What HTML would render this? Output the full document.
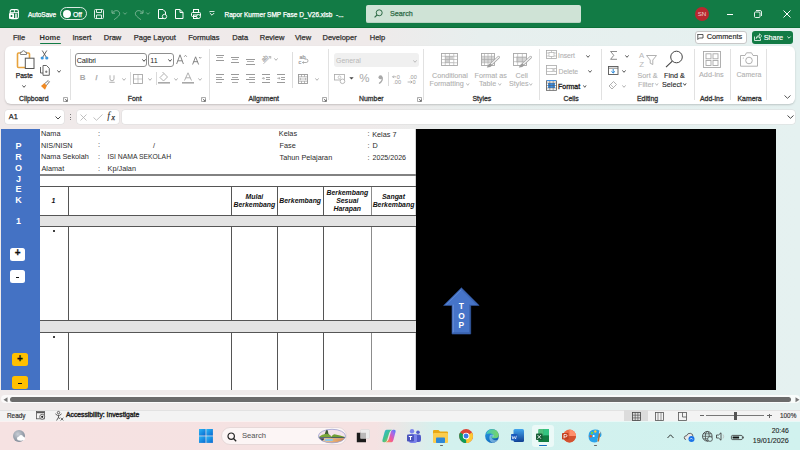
<!DOCTYPE html><html><head><meta charset="utf-8"><style>
html,body{margin:0;padding:0;width:800px;height:450px;overflow:hidden;}
body{position:relative;font-family:"Liberation Sans",sans-serif;background:linear-gradient(90deg,#f0eaea 0%,#efeaea 46%,#e7efee 60%,#e5f1f0 100%);}
.t{position:absolute;white-space:nowrap;-webkit-text-stroke:0.25px currentColor;}
.r{position:absolute;}
.ns{-webkit-text-stroke:0;}
svg{overflow:visible}
</style></head><body>
<div class="r" style="left:0px;top:0px;width:800px;height:28px;background:#127b45"></div>
<div class="r" style="left:0px;top:27px;width:800px;height:1px;background:#0b7037"></div>
<svg class="r" style="left:9px;top:8.8px" width="10" height="10.2" viewBox="0 0 10 10.2"><rect x="1.2" y="0.6" width="8.2" height="9" rx="1.6" fill="none" stroke="#fff" stroke-width="1.1"/><path d="M1.2 3.6 H9.4 M5.4 0.6 V3.6" stroke="#fff" stroke-width="0.9"/><rect x="0" y="4.2" width="5" height="5.6" rx="0.6" fill="#fff"/><rect x="1.7" y="6" width="1.6" height="2" fill="#127b45"/><rect x="6.3" y="4.6" width="1.4" height="4.6" fill="#fff"/></svg>
<div class="t " style="left:28px;top:11.56px;font-size:6.5px;line-height:6.5px;color:#ffffff;font-weight:normal;">AutoSave</div>
<div class="r" style="left:60px;top:7px;width:27px;height:13px;border:1px solid rgba(255,255,255,0.85);border-radius:7px;box-sizing:border-box"></div>
<div class="r" style="left:62.5px;top:9.5px;width:8.0px;height:8.0px;background:#fff;border-radius:50%"></div>
<div class="t " style="left:73px;top:11.79px;font-size:6.8px;line-height:6.8px;color:#ffffff;font-weight:normal;">Off</div>
<svg class="r" style="left:94px;top:9px" width="10" height="10" viewBox="0 0 10 10"><rect x="0.5" y="0.5" width="9" height="9" rx="1" fill="none" stroke="#dfeee5" stroke-width="1"/><path d="M2.5 0.5 V3.5 H7.5 V0.5 M2.5 9.5 V6 H7.5 V9.5" fill="none" stroke="#dfeee5" stroke-width="1"/></svg>
<svg class="r" style="left:111px;top:9px" width="10" height="11" viewBox="0 0 10 11"><path d="M1.5 3.8 C3.5 1, 7.5 0.8, 8.5 3.8 C9.3 6.3, 6.5 8, 3.2 10.6" fill="none" stroke="#7fb898" stroke-width="1"/><path d="M1 1.2 V4.2 H4" fill="none" stroke="#7fb898" stroke-width="1"/></svg>
<svg class="r" style="left:123px;top:12px" width="4" height="3" viewBox="0 0 4 3"><path d="M0.3 0.5 L2 2.3 L3.7 0.5" fill="none" stroke="#7fb898" stroke-width="0.8"/></svg>
<svg class="r" style="left:133.5px;top:9px" width="10" height="11" viewBox="0 0 10 11"><path d="M8.5 3.8 C6.5 1, 2.5 0.8, 1.5 3.8 C0.7 6.3, 3.5 8, 6.8 10.6" fill="none" stroke="#7fb898" stroke-width="1"/><path d="M9 1.2 V4.2 H6" fill="none" stroke="#7fb898" stroke-width="1"/></svg>
<svg class="r" style="left:146px;top:12px" width="4" height="3" viewBox="0 0 4 3"><path d="M0.3 0.5 L2 2.3 L3.7 0.5" fill="none" stroke="#7fb898" stroke-width="0.8"/></svg>
<svg class="r" style="left:158px;top:9px" width="10" height="10" viewBox="0 0 10 10"><path d="M0.5 0.5 H5 L7.5 3 V9.5 H0.5 Z" fill="none" stroke="#fff" stroke-width="1"/><circle cx="6.5" cy="7.5" r="2.2" fill="#127b45" stroke="#fff" stroke-width="0.9"/></svg>
<svg class="r" style="left:175px;top:9px" width="9" height="10" viewBox="0 0 9 10"><path d="M0.5 0.5 H5 L8 3.5 V9.5 H0.5 Z M5 0.5 V3.5 H8" fill="none" stroke="#fff" stroke-width="1"/></svg>
<svg class="r" style="left:191px;top:9px" width="10" height="10" viewBox="0 0 10 10"><rect x="2.5" y="0.5" width="5" height="3" fill="none" stroke="#fff" stroke-width="1"/><rect x="0.5" y="3.5" width="9" height="4" rx="1" fill="none" stroke="#fff" stroke-width="1"/><rect x="2.5" y="6" width="5" height="3.5" fill="none" stroke="#fff" stroke-width="1"/><circle cx="7.5" cy="7.5" r="2" fill="#127b45" stroke="#fff" stroke-width="0.9"/></svg>
<svg class="r" style="left:209px;top:11px" width="6" height="5" viewBox="0 0 6 5"><path d="M0.5 0.5 H5.5" stroke="#fff" stroke-width="0.8"/><path d="M0.8 2 L3 4.2 L5.2 2" fill="none" stroke="#fff" stroke-width="0.9"/></svg>
<div class="t " style="left:224.5px;top:11.56px;font-size:6.5px;line-height:6.5px;color:#ffffff;font-weight:normal;">Rapor Kurmer SMP Fase D_V26.xlsb&nbsp; -...</div>
<div class="r" style="left:366px;top:5px;width:215px;height:18px;background:#cfe3d6;border-radius:2px;border-bottom:1px solid #b8d3c2;box-sizing:border-box"></div>
<svg class="r" style="left:374px;top:9px" width="9" height="9" viewBox="0 0 9 9"><circle cx="5.2" cy="3.8" r="3" fill="none" stroke="#2f6b47" stroke-width="1"/><path d="M3 6 L0.6 8.4" stroke="#2f6b47" stroke-width="1.1"/></svg>
<div class="t " style="left:390px;top:10.47px;font-size:7.2px;line-height:7.2px;color:#2f6b47;font-weight:normal;">Search</div>
<div class="r" style="left:695px;top:7px;width:14px;height:14px;background:#b8282f;border-radius:50%"></div>
<div class="t " style="left:602px;width:200px;text-align:center;top:11.13px;font-size:6.2px;line-height:6.2px;color:#f0d0d2;font-weight:normal;-webkit-text-stroke:0">SN</div>
<div class="r" style="left:727px;top:14px;width:6px;height:1px;background:#fff"></div>
<svg class="r" style="left:754px;top:10px" width="8" height="8" viewBox="0 0 8 8"><rect x="0.5" y="2" width="5.5" height="5.5" rx="1" fill="none" stroke="#fff" stroke-width="0.9"/><path d="M2 0.5 H6 A1.5 1.5 0 0 1 7.5 2 V6" fill="none" stroke="#fff" stroke-width="0.9"/></svg>
<svg class="r" style="left:783px;top:10px" width="8" height="8" viewBox="0 0 8 8"><path d="M0.5 0.5 L7.5 7.5 M7.5 0.5 L0.5 7.5" stroke="#fff" stroke-width="1"/></svg>
<div class="t" style="left:13px;top:34.00px;font-size:7.5px;line-height:7.5px;color:#323130;font-weight:normal;">File</div>
<div class="t" style="left:39.5px;top:34.00px;font-size:7.5px;line-height:7.5px;color:#323130;font-weight:bold;-webkit-text-stroke:0">Home</div>
<div class="t" style="left:72.5px;top:34.00px;font-size:7.5px;line-height:7.5px;color:#323130;font-weight:normal;">Insert</div>
<div class="t" style="left:103.75px;top:34.00px;font-size:7.5px;line-height:7.5px;color:#323130;font-weight:normal;">Draw</div>
<div class="t" style="left:133.75px;top:34.00px;font-size:7.5px;line-height:7.5px;color:#323130;font-weight:normal;">Page Layout</div>
<div class="t" style="left:188.25px;top:34.00px;font-size:7.5px;line-height:7.5px;color:#323130;font-weight:normal;">Formulas</div>
<div class="t" style="left:232.25px;top:34.00px;font-size:7.5px;line-height:7.5px;color:#323130;font-weight:normal;">Data</div>
<div class="t" style="left:259.75px;top:34.00px;font-size:7.5px;line-height:7.5px;color:#323130;font-weight:normal;">Review</div>
<div class="t" style="left:295px;top:34.00px;font-size:7.5px;line-height:7.5px;color:#323130;font-weight:normal;">View</div>
<div class="t" style="left:322.5px;top:34.00px;font-size:7.5px;line-height:7.5px;color:#323130;font-weight:normal;">Developer</div>
<div class="t" style="left:369.75px;top:34.00px;font-size:7.5px;line-height:7.5px;color:#323130;font-weight:normal;">Help</div>
<div class="r" style="left:39.5px;top:43px;width:21.5px;height:1.2999999999999972px;background:#127b45;border-radius:1px"></div>
<div class="r" style="left:694.5px;top:30.5px;width:52.0px;height:13.0px;background:#fff;border:1px solid #c8c8c8;border-radius:3px;box-sizing:border-box"></div>
<svg class="r" style="left:697px;top:34.3px" width="6.5" height="6" viewBox="0 0 6.5 6"><path d="M0.5 0.5 H6 V4 H2.3 L0.8 5.5 V0.5 Z" fill="none" stroke="#333" stroke-width="0.8"/></svg>
<div class="t " style="left:706.7px;top:33.38px;font-size:7.35px;line-height:7.35px;color:#262626;font-weight:normal;-webkit-text-stroke:0.15px #262626">Comments</div>
<div class="r" style="left:751.5px;top:30.5px;width:41.5px;height:13.5px;background:#127b45;border-radius:3px"></div>
<svg class="r" style="left:754px;top:33px" width="8" height="8" viewBox="0 0 8 8"><path d="M0.5 3.5 V7.5 H6.5 V5.5" fill="none" stroke="#fff" stroke-width="0.8"/><path d="M2 5.5 Q2.5 2.5 5.5 2.5 V0.8 L7.8 3 L5.5 5.2 V3.7 Q3.5 3.7 2 5.5Z" fill="none" stroke="#fff" stroke-width="0.7"/></svg>
<div class="t " style="left:763.7px;top:33.71px;font-size:7.3px;line-height:7.3px;color:#fff;font-weight:normal;-webkit-text-stroke:0.15px #fff">Share</div>
<svg class="r" style="left:787px;top:36px" width="4" height="3" viewBox="0 0 4 3"><path d="M0.3 0.5 L2 2.2 L3.7 0.5" fill="none" stroke="#fff" stroke-width="0.8"/></svg>
<div class="r" style="left:5px;top:46px;width:790px;height:57.5px;background:#fff;border-radius:6px;box-shadow:0 1px 2px rgba(0,0,0,0.18)"></div>
<svg class="r" style="left:16px;top:50px" width="19" height="19" viewBox="0 0 19 19"><rect x="1.5" y="3" width="12" height="14.5" rx="1" fill="none" stroke="#e8a33d" stroke-width="1.6"/><path d="M4.5 3.5 V2.2 H6 A1.5 1.5 0 0 1 9 2.2 H10.5 V4.5 H4.5 Z" fill="#fff" stroke="#777" stroke-width="0.9"/><rect x="9.3" y="8.2" width="8.7" height="10.3" fill="#fff" stroke="#555" stroke-width="1"/></svg>
<div class="t " style="left:15.7px;top:72.75px;font-size:6.7px;line-height:6.7px;color:#262626;font-weight:normal;">Paste</div>
<svg class="r" style="left:22px;top:84.5px" width="4" height="3" viewBox="0 0 4 3"><path d="M0.4 0.4 L2.0 2.3 L3.6 0.4" fill="none" stroke="#424242" stroke-width="0.9"/></svg>
<svg class="r" style="left:40px;top:50px" width="9" height="10" viewBox="0 0 9 10"><path d="M2.2 0.5 L6.2 7 M6.8 0.5 L2.8 7" stroke="#555" stroke-width="0.9"/><circle cx="2.2" cy="8" r="1.6" fill="#3a96dd"/><circle cx="6.8" cy="8" r="1.6" fill="#3a96dd"/></svg>
<svg class="r" style="left:40px;top:65px" width="10" height="11" viewBox="0 0 10 11"><path d="M0.5 2 V8 H3" fill="none" stroke="#555" stroke-width="0.9"/><path d="M3 0.5 H6.5 L9.3 3.3 V10.3 H3 Z" fill="none" stroke="#555" stroke-width="0.9"/><path d="M5 6.8 H7.5 M6.25 5.5 V8" stroke="#555" stroke-width="0.7"/></svg>
<svg class="r" style="left:56.5px;top:70px" width="4" height="3" viewBox="0 0 4 3"><path d="M0.4 0.4 L2.0 2.3 L3.6 0.4" fill="none" stroke="#424242" stroke-width="0.9"/></svg>
<svg class="r" style="left:40px;top:80px" width="10" height="11" viewBox="0 0 10 11"><path d="M1 6 L5 9.8 L7 5.5 L4.5 3 Z" fill="#f08a24"/><path d="M4.8 3.5 L8.2 0.6 L9.4 1.8 L6.5 5.3" fill="#fff" stroke="#555" stroke-width="0.8"/></svg>
<div class="t " style="left:19px;top:95.54px;font-size:6.9px;line-height:6.9px;color:#333333;font-weight:normal;-webkit-text-stroke:0.3px #333333">Clipboard</div>
<svg class="r" style="left:63px;top:96.5px" width="5" height="5" viewBox="0 0 5 5"><path d="M0.5 4.5 V0.5 H4.5 V4.5 Z" fill="none" stroke="#8a8a8a" stroke-width="0.7"/><path d="M1.8 1.8 L4.2 4.2 M4.2 2.5 V4.2 H2.5" fill="none" stroke="#555" stroke-width="0.7"/></svg>
<div class="r" style="left:70px;top:49px;width:1px;height:51px;background:#e1e1e1"></div>
<div class="r" style="left:75px;top:53px;width:72px;height:14px;border:1px solid #8f8f8f;border-radius:3px;box-sizing:border-box"></div>
<div class="t " style="left:76.8px;top:56.97px;font-size:7.2px;line-height:7.2px;color:#262626;font-weight:normal;-webkit-text-stroke:0;letter-spacing:-0.2px">Calibri</div>
<svg class="r" style="left:141.5px;top:59.3px" width="4" height="3" viewBox="0 0 4 3"><path d="M0.4 0.4 L2.0 2.3 L3.6 0.4" fill="none" stroke="#333" stroke-width="0.9"/></svg>
<div class="r" style="left:148.3px;top:53px;width:25.399999999999977px;height:14px;border:1px solid #8f8f8f;border-radius:3px;box-sizing:border-box"></div>
<div class="t " style="left:150.3px;top:56.97px;font-size:7.2px;line-height:7.2px;color:#262626;font-weight:normal;-webkit-text-stroke:0">11</div>
<svg class="r" style="left:168px;top:59.3px" width="4" height="3" viewBox="0 0 4 3"><path d="M0.4 0.4 L2.0 2.3 L3.6 0.4" fill="none" stroke="#333" stroke-width="0.9"/></svg>
<svg class="r" style="left:176px;top:54px" width="12" height="11" viewBox="0 0 12 11"><path d="M0.6 10 L4 0.8 L7.4 10 M1.8 6.8 H6.2" fill="none" stroke="#777" stroke-width="0.9"/><path d="M8.2 2.8 L9.5 1.3 L10.8 2.8" fill="none" stroke="#777" stroke-width="0.7"/></svg>
<svg class="r" style="left:192px;top:56px" width="10" height="9" viewBox="0 0 10 9"><path d="M0.6 8.5 L3.6 0.8 L6.6 8.5 M1.6 5.7 H5.6" fill="none" stroke="#777" stroke-width="0.9"/><path d="M7 1 L8.2 2.3 L9.4 1" fill="none" stroke="#777" stroke-width="0.7"/></svg>
<div class="t " style="left:79.8px;top:74.12px;font-size:8px;line-height:8px;color:#a8a8a8;font-weight:bold;-webkit-text-stroke:0">B</div>
<div class="t " style="left:95.3px;top:74.12px;font-size:8px;line-height:8px;color:#a8a8a8;font-weight:normal;font-style:italic">I</div>
<svg class="r" style="left:109.3px;top:75px" width="6" height="8" viewBox="0 0 6 8"><path d="M1 0.3 V3.8 A2 2 0 0 0 5 3.8 V0.3" fill="none" stroke="#a8a8a8" stroke-width="0.9"/><path d="M0.3 7.3 H5.7" stroke="#a8a8a8" stroke-width="0.9"/></svg>
<svg class="r" style="left:121.5px;top:77.5px" width="4" height="3" viewBox="0 0 4 3"><path d="M0.4 0.4 L2.0 2.3 L3.6 0.4" fill="none" stroke="#a8a8a8" stroke-width="0.9"/></svg>
<div class="r" style="left:129.5px;top:72px;width:1.0px;height:13px;background:#dadada"></div>
<svg class="r" style="left:133px;top:74px" width="10" height="10" viewBox="0 0 10 10"><rect x="0.5" y="0.5" width="9" height="9" fill="none" stroke="#a8a8a8" stroke-width="0.9"/><path d="M5 0.5 V9.5 M0.5 5 H9.5" stroke="#a8a8a8" stroke-width="0.6"/></svg>
<svg class="r" style="left:147.5px;top:77.5px" width="4" height="3" viewBox="0 0 4 3"><path d="M0.4 0.4 L2.0 2.3 L3.6 0.4" fill="none" stroke="#a8a8a8" stroke-width="0.9"/></svg>
<div class="r" style="left:155.5px;top:72px;width:1.0px;height:13px;background:#dadada"></div>
<svg class="r" style="left:158px;top:72px" width="12" height="12" viewBox="0 0 12 12"><path d="M2 5.5 L6 1.5 L9.5 5 L5.5 9 Z" fill="none" stroke="#a8a8a8" stroke-width="0.9"/><path d="M6 1.5 L4.5 0" stroke="#a8a8a8" stroke-width="0.9"/><rect x="0" y="10" width="12" height="1.6" fill="#a8a8a8"/></svg>
<svg class="r" style="left:173.5px;top:77.5px" width="4" height="3" viewBox="0 0 4 3"><path d="M0.4 0.4 L2.0 2.3 L3.6 0.4" fill="none" stroke="#a8a8a8" stroke-width="0.9"/></svg>
<svg class="r" style="left:182px;top:72px" width="12" height="12" viewBox="0 0 12 12"><path d="M2.5 8.5 L6 0.8 L9.5 8.5 M3.8 5.8 H8.2" fill="none" stroke="#a8a8a8" stroke-width="0.9"/><rect x="0" y="10" width="12" height="1.6" fill="#a8a8a8"/></svg>
<svg class="r" style="left:197.5px;top:77.5px" width="4" height="3" viewBox="0 0 4 3"><path d="M0.4 0.4 L2.0 2.3 L3.6 0.4" fill="none" stroke="#a8a8a8" stroke-width="0.9"/></svg>
<div class="t " style="left:127.8px;top:95.54px;font-size:6.9px;line-height:6.9px;color:#333333;font-weight:normal;-webkit-text-stroke:0.3px #333333">Font</div>
<svg class="r" style="left:201px;top:96.5px" width="5" height="5" viewBox="0 0 5 5"><path d="M0.5 4.5 V0.5 H4.5 V4.5 Z" fill="none" stroke="#8a8a8a" stroke-width="0.7"/><path d="M1.8 1.8 L4.2 4.2 M4.2 2.5 V4.2 H2.5" fill="none" stroke="#555" stroke-width="0.7"/></svg>
<div class="r" style="left:208.5px;top:49px;width:1.0px;height:51px;background:#e1e1e1"></div>
<div class="r" style="left:216px;top:55px;width:8px;height:1.0px;background:#9a9a9a"></div>
<div class="r" style="left:217px;top:57.3px;width:6px;height:1.0px;background:#b0b0b0"></div>
<div class="r" style="left:216px;top:60px;width:8px;height:1.0px;background:#9a9a9a"></div>
<div class="r" style="left:231px;top:56.8px;width:8px;height:1.0px;background:#9a9a9a"></div>
<div class="r" style="left:232px;top:59px;width:6px;height:1.0px;background:#b0b0b0"></div>
<div class="r" style="left:231px;top:61.5px;width:8px;height:1.0px;background:#9a9a9a"></div>
<div class="r" style="left:246px;top:59.2px;width:9px;height:1.0px;background:#9a9a9a"></div>
<div class="r" style="left:247px;top:61.4px;width:7px;height:1.0px;background:#b0b0b0"></div>
<div class="r" style="left:246px;top:64px;width:9px;height:1.0px;background:#9a9a9a"></div>
<svg class="r" style="left:260px;top:53px" width="12" height="12" viewBox="0 0 12 12"><g transform="rotate(-45 5 5)"><text x="1.2" y="7" font-size="6" fill="#a8a8a8" font-family="Liberation Sans" stroke="#a8a8a8" stroke-width="0.25">ab</text></g><path d="M3.5 10.8 L10.5 3.8" stroke="#a8a8a8" stroke-width="0.8"/><path d="M8.6 3.6 L10.8 3.5 L10.7 5.7" fill="none" stroke="#a8a8a8" stroke-width="0.8"/></svg>
<svg class="r" style="left:273.5px;top:57.5px" width="4" height="3" viewBox="0 0 4 3"><path d="M0.4 0.4 L2.0 2.3 L3.6 0.4" fill="none" stroke="#a8a8a8" stroke-width="0.9"/></svg>
<div class="r" style="left:216px;top:74.2px;width:8px;height:1.0px;background:#9a9a9a"></div>
<div class="r" style="left:231px;top:74.2px;width:8px;height:1.0px;background:#9a9a9a"></div>
<div class="r" style="left:246px;top:74.2px;width:9px;height:1.0px;background:#9a9a9a"></div>
<div class="r" style="left:216px;top:76.9px;width:6px;height:1.0px;background:#aaaaaa"></div>
<div class="r" style="left:232px;top:76.9px;width:6px;height:1.0px;background:#aaaaaa"></div>
<div class="r" style="left:249px;top:76.9px;width:6px;height:1.0px;background:#aaaaaa"></div>
<div class="r" style="left:216px;top:79.2px;width:8px;height:1.0px;background:#9a9a9a"></div>
<div class="r" style="left:231px;top:79.2px;width:8px;height:1.0px;background:#9a9a9a"></div>
<div class="r" style="left:246px;top:79.2px;width:9px;height:1.0px;background:#9a9a9a"></div>
<div class="r" style="left:216px;top:81.6px;width:6px;height:1.0px;background:#aaaaaa"></div>
<div class="r" style="left:232px;top:81.6px;width:6px;height:1.0px;background:#aaaaaa"></div>
<div class="r" style="left:249px;top:81.6px;width:6px;height:1.0px;background:#aaaaaa"></div>
<div class="r" style="left:262px;top:74.4px;width:8px;height:1.0px;background:#9a9a9a"></div>
<div class="r" style="left:266px;top:76.8px;width:4px;height:1.0px;background:#a0a0a0"></div>
<div class="r" style="left:266px;top:79.2px;width:4px;height:1.0px;background:#a0a0a0"></div>
<div class="r" style="left:262px;top:81.6px;width:8px;height:1.0px;background:#9a9a9a"></div>
<svg class="r" style="left:262px;top:77px" width="4" height="2" viewBox="0 0 4 2"><path transform="translate(0 1.3)" d="M3 0 H0.5 M1.6 -1.1 L0.5 0 L1.6 1.1" fill="none" stroke="#a0a0a0" stroke-width="0.8"/></svg>
<div class="r" style="left:277px;top:74.4px;width:8px;height:1.0px;background:#9a9a9a"></div>
<div class="r" style="left:281px;top:76.8px;width:4px;height:1.0px;background:#a0a0a0"></div>
<div class="r" style="left:281px;top:79.2px;width:4px;height:1.0px;background:#a0a0a0"></div>
<div class="r" style="left:277px;top:81.6px;width:8px;height:1.0px;background:#9a9a9a"></div>
<svg class="r" style="left:277px;top:77px" width="4" height="2" viewBox="0 0 4 2"><path transform="translate(0 1.3)" d="M0.3 0 H3 M1.9 -1.1 L3 0 L1.9 1.1" fill="none" stroke="#a0a0a0" stroke-width="0.8"/></svg>
<div class="r" style="left:291.7px;top:52px;width:1.0px;height:36px;background:#dedede"></div>
<svg class="r" style="left:298px;top:54px" width="12" height="11" viewBox="0 0 12 11"><text x="1.5" y="4.8" font-size="5.5" fill="#999" font-family="Liberation Sans" stroke="#999" stroke-width="0.2">ab</text><text x="0.5" y="9.8" font-size="5.5" fill="#999" font-family="Liberation Sans" stroke="#999" stroke-width="0.2">c</text><path d="M4.5 8.5 H8.3 A1.7 1.7 0 0 0 8.3 5.1 H6.5" fill="none" stroke="#999" stroke-width="0.8"/><path d="M5.8 7.4 L4.4 8.5 L5.8 9.6" fill="none" stroke="#999" stroke-width="0.7"/></svg>
<svg class="r" style="left:298px;top:74px" width="10" height="10" viewBox="0 0 10 10"><rect x="0.5" y="0.5" width="9" height="9" fill="none" stroke="#999" stroke-width="0.9"/><path d="M0.5 2.8 H9.5 M0.5 7.2 H9.5 M3.5 0.5 V2.8 M6.5 0.5 V2.8 M3.5 7.2 V9.5 M6.5 7.2 V9.5" stroke="#999" stroke-width="0.7"/><path d="M1.5 5 H8.5 M3 4 L1.7 5 L3 6 M7 4 L8.3 5 L7 6" fill="none" stroke="#999" stroke-width="0.6"/></svg>
<svg class="r" style="left:315px;top:77.5px" width="4" height="3" viewBox="0 0 4 3"><path d="M0.4 0.4 L2.0 2.3 L3.6 0.4" fill="none" stroke="#a8a8a8" stroke-width="0.9"/></svg>
<div class="t " style="left:248.4px;top:95.54px;font-size:6.9px;line-height:6.9px;color:#333333;font-weight:normal;-webkit-text-stroke:0.3px #333333">Alignment</div>
<svg class="r" style="left:322px;top:96.5px" width="5" height="5" viewBox="0 0 5 5"><path d="M0.5 4.5 V0.5 H4.5 V4.5 Z" fill="none" stroke="#8a8a8a" stroke-width="0.7"/><path d="M1.8 1.8 L4.2 4.2 M4.2 2.5 V4.2 H2.5" fill="none" stroke="#555" stroke-width="0.7"/></svg>
<div class="r" style="left:328.4px;top:49px;width:1.0px;height:51px;background:#e1e1e1"></div>
<div class="r" style="left:333.5px;top:53px;width:85.10000000000002px;height:14px;background:#f0f0f0;border-radius:3px"></div>
<div class="t " style="left:336px;top:57.08px;font-size:7px;line-height:7px;color:#b8b8b8;font-weight:normal;-webkit-text-stroke:0">General</div>
<svg class="r" style="left:412.5px;top:59.5px" width="4" height="3" viewBox="0 0 4 3"><path d="M0.4 0.4 L2.0 2.3 L3.6 0.4" fill="none" stroke="#b4b4b4" stroke-width="0.9"/></svg>
<svg class="r" style="left:334px;top:74px" width="12" height="10" viewBox="0 0 12 10"><rect x="0.5" y="0.5" width="10" height="5.5" fill="none" stroke="#a8a8a8" stroke-width="0.8"/><circle cx="5.5" cy="3.3" r="1.4" fill="none" stroke="#a8a8a8" stroke-width="0.6"/><circle cx="8.5" cy="7.3" r="2.3" fill="#fff" stroke="#a8a8a8" stroke-width="0.8"/></svg>
<svg class="r" style="left:349px;top:77px" width="5" height="3" viewBox="0 0 5 3"><path d="M0.3 0.3 H4.7 L2.5 2.6 Z" fill="#444"/></svg>
<div class="t " style="left:359.3px;top:72.56px;font-size:11.5px;line-height:11.5px;color:#a8a8a8;font-weight:normal;-webkit-text-stroke:0">%</div>
<svg class="r" style="left:377.5px;top:74.5px" width="5" height="9" viewBox="0 0 5 9"><circle cx="2.5" cy="2.3" r="2" fill="#a8a8a8"/><path d="M4.3 2.5 Q4.6 6.5 1 8.5" fill="none" stroke="#a8a8a8" stroke-width="1.3"/></svg>
<div class="r" style="left:388px;top:72px;width:1px;height:14px;background:#dadada"></div>
<svg class="r" style="left:391.5px;top:73.5px" width="11" height="11" viewBox="0 0 11 11"><text x="4.8" y="4.8" font-size="5.6" fill="#999" font-family="Liberation Sans">0</text><text x="1.3" y="10" font-size="5.6" fill="#999" font-family="Liberation Sans">.00</text><path d="M4.3 2.8 H0.6 M1.9 1.5 L0.6 2.8 L1.9 4.1" fill="none" stroke="#999" stroke-width="0.7"/></svg>
<svg class="r" style="left:406.5px;top:73.5px" width="11" height="11" viewBox="0 0 11 11"><text x="2" y="4.8" font-size="5.6" fill="#999" font-family="Liberation Sans">.00</text><text x="5.5" y="10" font-size="5.6" fill="#999" font-family="Liberation Sans">0</text><path d="M0.6 8 H5 M3.7 6.7 L5 8 L3.7 9.3" fill="none" stroke="#999" stroke-width="0.7"/></svg>
<div class="t " style="left:359px;top:95.54px;font-size:6.9px;line-height:6.9px;color:#333333;font-weight:normal;-webkit-text-stroke:0.3px #333333">Number</div>
<svg class="r" style="left:417px;top:96.5px" width="5" height="5" viewBox="0 0 5 5"><path d="M0.5 4.5 V0.5 H4.5 V4.5 Z" fill="none" stroke="#8a8a8a" stroke-width="0.7"/><path d="M1.8 1.8 L4.2 4.2 M4.2 2.5 V4.2 H2.5" fill="none" stroke="#555" stroke-width="0.7"/></svg>
<div class="r" style="left:423.3px;top:49px;width:1.0px;height:51px;background:#e1e1e1"></div>
<svg class="r" style="left:441px;top:53px" width="17" height="13" viewBox="0 0 17 13"><rect x="4" y="3" width="8" height="7" fill="#d0d0d0"/><rect x="8.5" y="6.5" width="4" height="3" fill="#fff"/><rect x="0.5" y="0.5" width="16" height="12" fill="none" stroke="#a8a8a8" stroke-width="0.9"/><path d="M0.5 3.25 H16.5" stroke="#a8a8a8" stroke-width="0.6"/><path d="M0.5 6.50 H16.5" stroke="#a8a8a8" stroke-width="0.6"/><path d="M0.5 9.75 H16.5" stroke="#a8a8a8" stroke-width="0.6"/><path d="M4.25 0.5 V12.5" stroke="#a8a8a8" stroke-width="0.6"/><path d="M8.50 0.5 V12.5" stroke="#a8a8a8" stroke-width="0.6"/><path d="M12.75 0.5 V12.5" stroke="#a8a8a8" stroke-width="0.6"/></svg>
<div class="t " style="left:432px;top:71.67px;font-size:7.2px;line-height:7.2px;color:#b0b0b0;font-weight:normal;-webkit-text-stroke:0.1px #b0b0b0">Conditional</div>
<div class="t " style="left:429.5px;top:80.27px;font-size:7.2px;line-height:7.2px;color:#b0b0b0;font-weight:normal;-webkit-text-stroke:0.1px #b0b0b0">Formatting</div>
<svg class="r" style="left:466px;top:82.8px" width="3.5" height="3" viewBox="0 0 3.5 3"><path d="M0.4 0.4 L1.75 2.3 L3.1 0.4" fill="none" stroke="#b4b4b4" stroke-width="0.9"/></svg>
<svg class="r" style="left:481px;top:53px" width="14" height="13" viewBox="0 0 14 13"><rect x="0.5" y="3.5" width="13" height="6" fill="#d6d6d6"/><rect x="0.5" y="0.5" width="13" height="12" fill="none" stroke="#a8a8a8" stroke-width="0.9"/><path d="M0.5 3.25 H13.5" stroke="#a8a8a8" stroke-width="0.6"/><path d="M0.5 6.50 H13.5" stroke="#a8a8a8" stroke-width="0.6"/><path d="M0.5 9.75 H13.5" stroke="#a8a8a8" stroke-width="0.6"/><path d="M3.50 0.5 V12.5" stroke="#a8a8a8" stroke-width="0.6"/><path d="M7.00 0.5 V12.5" stroke="#a8a8a8" stroke-width="0.6"/><path d="M10.50 0.5 V12.5" stroke="#a8a8a8" stroke-width="0.6"/></svg>
<svg class="r" style="left:486px;top:56px" width="14" height="12" viewBox="0 0 14 12"><path d="M12.6 1.2 L5.2 8.2" stroke="#a8a8a8" stroke-width="2.6" stroke-linecap="round"/><path d="M12.6 1.2 L5.2 8.2" stroke="#fff" stroke-width="1.1" stroke-linecap="round"/><path d="M4.2 7.2 L6.4 9.2 Q4.5 11.8 0.8 11.6 Q1.6 8.6 4.2 7.2Z" fill="#9c9c9c"/></svg>
<div class="t " style="left:474.5px;top:71.67px;font-size:7.2px;line-height:7.2px;color:#b0b0b0;font-weight:normal;-webkit-text-stroke:0.1px #b0b0b0">Format as</div>
<div class="t " style="left:479px;top:80.27px;font-size:7.2px;line-height:7.2px;color:#b0b0b0;font-weight:normal;-webkit-text-stroke:0.1px #b0b0b0">Table</div>
<svg class="r" style="left:497.5px;top:82.8px" width="3.5" height="3" viewBox="0 0 3.5 3"><path d="M0.4 0.4 L1.75 2.3 L3.1 0.4" fill="none" stroke="#b4b4b4" stroke-width="0.9"/></svg>
<svg class="r" style="left:513px;top:53px" width="14" height="13" viewBox="0 0 14 13"><rect x="3" y="3.5" width="10" height="6" fill="#d6d6d6"/><rect x="0.5" y="0.5" width="13" height="12" fill="none" stroke="#a8a8a8" stroke-width="0.9"/><path d="M0.5 4.33 H13.5" stroke="#a8a8a8" stroke-width="0.6"/><path d="M0.5 8.67 H13.5" stroke="#a8a8a8" stroke-width="0.6"/><path d="M4.67 0.5 V12.5" stroke="#a8a8a8" stroke-width="0.6"/><path d="M9.33 0.5 V12.5" stroke="#a8a8a8" stroke-width="0.6"/></svg>
<svg class="r" style="left:518px;top:56px" width="14" height="12" viewBox="0 0 14 12"><path d="M12.6 1.2 L5.2 8.2" stroke="#a8a8a8" stroke-width="2.6" stroke-linecap="round"/><path d="M12.6 1.2 L5.2 8.2" stroke="#fff" stroke-width="1.1" stroke-linecap="round"/><path d="M4.2 7.2 L6.4 9.2 Q4.5 11.8 0.8 11.6 Q1.6 8.6 4.2 7.2Z" fill="#9c9c9c"/></svg>
<div class="t " style="left:515.5px;top:71.67px;font-size:7.2px;line-height:7.2px;color:#b0b0b0;font-weight:normal;-webkit-text-stroke:0.1px #b0b0b0">Cell</div>
<div class="t " style="left:509px;top:80.27px;font-size:7.2px;line-height:7.2px;color:#b0b0b0;font-weight:normal;-webkit-text-stroke:0.1px #b0b0b0">Styles</div>
<svg class="r" style="left:528.5px;top:82.8px" width="3.5" height="3" viewBox="0 0 3.5 3"><path d="M0.4 0.4 L1.75 2.3 L3.1 0.4" fill="none" stroke="#b4b4b4" stroke-width="0.9"/></svg>
<div class="t " style="left:472.5px;top:95.54px;font-size:6.9px;line-height:6.9px;color:#333333;font-weight:normal;-webkit-text-stroke:0.3px #333333">Styles</div>
<div class="r" style="left:539px;top:49px;width:1px;height:51px;background:#e1e1e1"></div>
<svg class="r" style="left:546px;top:50px" width="11" height="10" viewBox="0 0 11 10"><rect x="0.5" y="0.5" width="10" height="8" fill="none" stroke="#a8a8a8" stroke-width="0.8"/><path d="M0.5 3 H10.5 M0.5 6 H10.5 M5.5 0.5 V8.5" stroke="#a8a8a8" stroke-width="0.6"/><rect x="3" y="2.5" width="5" height="4" fill="#fff" stroke="#a8a8a8" stroke-width="0.6"/></svg>
<div class="t " style="left:558px;top:52.89px;font-size:6.8px;line-height:6.8px;color:#b0b0b0;font-weight:normal;-webkit-text-stroke:0.1px #b0b0b0">Insert</div>
<svg class="r" style="left:585.5px;top:54.6px" width="4" height="3" viewBox="0 0 4 3"><path d="M0.4 0.4 L2.0 2.3 L3.6 0.4" fill="none" stroke="#444" stroke-width="0.9"/></svg>
<svg class="r" style="left:546px;top:65px" width="11" height="11" viewBox="0 0 11 11"><rect x="0.5" y="0.5" width="10" height="9" fill="none" stroke="#a8a8a8" stroke-width="0.8"/><path d="M0.5 3.5 H10.5 M0.5 6.5 H10.5" stroke="#a8a8a8" stroke-width="0.6"/><path d="M6 3.5 L9 6.5 M9 3.5 L6 6.5" stroke="#a8a8a8" stroke-width="0.7"/></svg>
<div class="t " style="left:558.5px;top:68.59px;font-size:6.8px;line-height:6.8px;color:#b0b0b0;font-weight:normal;-webkit-text-stroke:0.1px #b0b0b0">Delete</div>
<svg class="r" style="left:588px;top:69.8px" width="4" height="3" viewBox="0 0 4 3"><path d="M0.4 0.4 L2.0 2.3 L3.6 0.4" fill="none" stroke="#444" stroke-width="0.9"/></svg>
<svg class="r" style="left:546px;top:80px" width="11" height="11" viewBox="0 0 11 11"><rect x="0.5" y="0.8" width="10" height="9.5" fill="#fff" stroke="#555" stroke-width="0.8"/><rect x="2" y="3" width="7" height="5" fill="#3a8ee6"/><path d="M0.5 3 H10.5 M0.5 5.5 H10.5 M0.5 8 H10.5 M3.8 0.8 V10.3 M7.2 0.8 V10.3" stroke="#555" stroke-width="0.5"/><path d="M1 0.5 H10" stroke="#3a8ee6" stroke-width="1"/></svg>
<div class="t " style="left:558px;top:83.28px;font-size:7px;line-height:7px;color:#262626;font-weight:normal;-webkit-text-stroke:0.32px #262626">Format</div>
<svg class="r" style="left:582.5px;top:84.8px" width="3.5" height="3" viewBox="0 0 3.5 3"><path d="M0.4 0.4 L1.75 2.3 L3.1 0.4" fill="none" stroke="#444" stroke-width="0.9"/></svg>
<div class="t " style="left:563.5px;top:95.54px;font-size:6.9px;line-height:6.9px;color:#333333;font-weight:normal;-webkit-text-stroke:0.3px #333333">Cells</div>
<div class="r" style="left:601.2px;top:49px;width:1.0px;height:51px;background:#e1e1e1"></div>
<svg class="r" style="left:609.5px;top:51px" width="8" height="9" viewBox="0 0 8 9"><path d="M7 0.5 H0.6 L3.8 4.3 L0.6 8.3 H7" fill="none" stroke="#666" stroke-width="0.75"/></svg>
<svg class="r" style="left:625px;top:55px" width="4" height="3" viewBox="0 0 4 3"><path d="M0.4 0.4 L2.0 2.3 L3.6 0.4" fill="none" stroke="#444" stroke-width="0.9"/></svg>
<svg class="r" style="left:608px;top:65.8px" width="10.5" height="9" viewBox="0 0 10.5 9"><rect x="0.5" y="0.5" width="9.5" height="8" fill="#fff" stroke="#555" stroke-width="0.9"/><path d="M0.5 2.2 H10" stroke="#555" stroke-width="0.7"/><path d="M5.2 3 V7 M3.4 5.3 L5.2 7 L7 5.3" fill="none" stroke="#2b88d8" stroke-width="1"/></svg>
<svg class="r" style="left:621.5px;top:69.7px" width="4" height="3" viewBox="0 0 4 3"><path d="M0.4 0.4 L2.0 2.3 L3.6 0.4" fill="none" stroke="#444" stroke-width="0.9"/></svg>
<svg class="r" style="left:608px;top:80px" width="10" height="10" viewBox="0 0 10 10"><path d="M1 6 L5.5 1.5 L8.5 4.5 L4 9 Z" fill="none" stroke="#a8a8a8" stroke-width="0.9"/><path d="M2.5 4.5 L5.5 7.5" stroke="#a8a8a8" stroke-width="0.7"/></svg>
<svg class="r" style="left:621.5px;top:84.5px" width="4" height="3" viewBox="0 0 4 3"><path d="M0.4 0.4 L2.0 2.3 L3.6 0.4" fill="none" stroke="#a8a8a8" stroke-width="0.9"/></svg>
<svg class="r" style="left:639px;top:51px" width="19" height="16" viewBox="0 0 19 16"><text x="0" y="7.3" font-size="7.8" fill="#b8b8b8" font-family="Liberation Sans">A</text><text x="0.3" y="15.5" font-size="7.8" fill="#b8b8b8" font-family="Liberation Sans">Z</text><path d="M7.5 4.5 H17.5 L13.8 9 V13.5 L11.2 12.2 V9 Z" fill="none" stroke="#a8a8a8" stroke-width="0.9"/></svg>
<div class="t " style="left:637.5px;top:72.17px;font-size:7.2px;line-height:7.2px;color:#b0b0b0;font-weight:normal;-webkit-text-stroke:0.1px #b0b0b0">Sort &amp;</div>
<div class="t " style="left:638px;top:81.27px;font-size:7.2px;line-height:7.2px;color:#b0b0b0;font-weight:normal;-webkit-text-stroke:0.1px #b0b0b0">Filter</div>
<svg class="r" style="left:654.5px;top:83px" width="3.5" height="3" viewBox="0 0 3.5 3"><path d="M0.4 0.4 L1.75 2.3 L3.1 0.4" fill="none" stroke="#b4b4b4" stroke-width="0.9"/></svg>
<svg class="r" style="left:665px;top:50px" width="19" height="18" viewBox="0 0 19 18"><circle cx="11.5" cy="7" r="5.8" fill="none" stroke="#444" stroke-width="1"/><path d="M7.3 11.2 L1 17.2" stroke="#444" stroke-width="1.1"/></svg>
<div class="t " style="left:664px;top:71.87px;font-size:7.2px;line-height:7.2px;color:#262626;font-weight:normal;-webkit-text-stroke:0.12px #262626">Find &amp;</div>
<div class="t " style="left:662px;top:81.17px;font-size:7.2px;line-height:7.2px;color:#262626;font-weight:normal;-webkit-text-stroke:0.12px #262626">Select</div>
<svg class="r" style="left:683px;top:83px" width="3.5" height="3" viewBox="0 0 3.5 3"><path d="M0.4 0.4 L1.75 2.3 L3.1 0.4" fill="none" stroke="#333" stroke-width="0.9"/></svg>
<div class="t " style="left:637px;top:95.54px;font-size:6.9px;line-height:6.9px;color:#333333;font-weight:normal;-webkit-text-stroke:0.3px #333333">Editing</div>
<div class="r" style="left:693.6px;top:49px;width:1.0px;height:51px;background:#e1e1e1"></div>
<svg class="r" style="left:703px;top:51px" width="18" height="17" viewBox="0 0 18 17"><rect x="0.5" y="0.5" width="17" height="16" fill="none" stroke="#a8a8a8" stroke-width="0.9"/><rect x="3" y="2.8" width="5" height="5" fill="none" stroke="#a8a8a8" stroke-width="0.9"/><rect x="10" y="2.8" width="5" height="5" fill="none" stroke="#a8a8a8" stroke-width="0.9"/><rect x="3" y="9.5" width="5" height="5" fill="none" stroke="#a8a8a8" stroke-width="0.9"/><rect x="10" y="9.5" width="5" height="5" fill="none" stroke="#a8a8a8" stroke-width="0.9"/></svg>
<div class="t " style="left:699px;top:71.11px;font-size:7.3px;line-height:7.3px;color:#b0b0b0;font-weight:normal;-webkit-text-stroke:0.1px #b0b0b0">Add-ins</div>
<div class="t " style="left:700px;top:95.54px;font-size:6.9px;line-height:6.9px;color:#333333;font-weight:normal;-webkit-text-stroke:0.3px #333333">Add-ins</div>
<div class="r" style="left:730.4px;top:49px;width:1.0px;height:51px;background:#e1e1e1"></div>
<svg class="r" style="left:740px;top:52px" width="18" height="15" viewBox="0 0 18 15"><path d="M0.5 3.5 H5 L6.5 0.8 H11.5 L13 3.5 H17.5 V14.2 H0.5 Z" fill="none" stroke="#a8a8a8" stroke-width="0.9"/><circle cx="9" cy="8.5" r="3.3" fill="none" stroke="#a8a8a8" stroke-width="0.9"/><circle cx="3.3" cy="6" r="0.6" fill="#a8a8a8"/></svg>
<div class="t " style="left:736.5px;top:71.28px;font-size:7px;line-height:7px;color:#b0b0b0;font-weight:normal;-webkit-text-stroke:0.1px #b0b0b0">Camera</div>
<div class="t " style="left:737.5px;top:95.54px;font-size:6.9px;line-height:6.9px;color:#333333;font-weight:normal;-webkit-text-stroke:0.3px #333333">Kamera</div>
<div class="r" style="left:766.4px;top:49px;width:1.0px;height:51px;background:#e1e1e1"></div>
<svg class="r" style="left:784px;top:95px" width="7" height="4" viewBox="0 0 7 4"><path d="M0.5 0.5 L3.5 3.3 L6.5 0.5" fill="none" stroke="#444" stroke-width="0.9"/></svg>
<div class="r" style="left:5px;top:109.6px;width:59px;height:14.0px;background:#fff;border-radius:3px;box-shadow:0 0 0 0.5px #dcdcdc"></div>
<div class="t " style="left:8.8px;top:112.91px;font-size:7.3px;line-height:7.3px;color:#262626;font-weight:normal;">A1</div>
<svg class="r" style="left:55px;top:115.5px" width="6" height="4" viewBox="0 0 6 4"><path d="M0.5 0.5 L3 3 L5.5 0.5" fill="none" stroke="#333" stroke-width="0.9"/></svg>
<div class="r" style="left:69.5px;top:114.3px;width:1.2000000000000028px;height:1.2000000000000028px;background:#555;border-radius:50%"></div>
<div class="r" style="left:69.5px;top:116.8px;width:1.2000000000000028px;height:1.2000000000000028px;background:#555;border-radius:50%"></div>
<div class="r" style="left:69.5px;top:119.3px;width:1.2000000000000028px;height:1.2000000000000028px;background:#555;border-radius:50%"></div>
<div class="r" style="left:76.7px;top:109.6px;width:42.3px;height:14.0px;background:#fff;border-radius:3px;box-shadow:0 0 0 0.5px #dcdcdc"></div>
<svg class="r" style="left:80px;top:113.5px" width="7" height="7" viewBox="0 0 7 7"><path d="M0.5 0.5 L6.5 6.5 M6.5 0.5 L0.5 6.5" stroke="#b0b0b0" stroke-width="0.8"/></svg>
<svg class="r" style="left:92.5px;top:113.5px" width="10" height="7" viewBox="0 0 10 7"><path d="M0.5 3.5 L3.5 6.3 L9.5 0.5" fill="none" stroke="#b0b0b0" stroke-width="0.8"/></svg>
<svg class="r" style="left:106px;top:110px" width="12" height="12" viewBox="0 0 12 12"><text x="1.2" y="9.2" font-size="10" font-style="italic" fill="#2a2a2a" font-family="Liberation Serif">f</text><text x="5.6" y="9.6" font-size="7.6" font-style="italic" fill="#2a2a2a" font-family="Liberation Serif" stroke="#2a2a2a" stroke-width="0.25">x</text></svg>
<div class="r" style="left:122px;top:109.6px;width:673px;height:14.0px;background:#fff;border-radius:3px;box-shadow:0 0 0 0.5px #dcdcdc"></div>
<svg class="r" style="left:787px;top:115.3px" width="7" height="4" viewBox="0 0 7 4"><path d="M0.5 0.5 L3.5 3.3 L6.5 0.5" fill="none" stroke="#333" stroke-width="0.9"/></svg>
<div class="r" style="left:1px;top:129px;width:39px;height:261px;background:#4472c4"></div>
<div class="r" style="left:40px;top:129px;width:376px;height:261px;background:#fff"></div>
<div class="r" style="left:415px;top:129px;width:1px;height:261px;background:#d4d4d4"></div>
<div class="r" style="left:416px;top:129px;width:360px;height:261px;background:#000"></div>
<div class="t ns" style="left:-81.6px;width:200px;text-align:center;top:141.96px;font-size:9px;line-height:9px;color:#fff;font-weight:bold;">P</div>
<div class="t ns" style="left:-81.6px;width:200px;text-align:center;top:152.86px;font-size:9px;line-height:9px;color:#fff;font-weight:bold;">R</div>
<div class="t ns" style="left:-81.6px;width:200px;text-align:center;top:163.76px;font-size:9px;line-height:9px;color:#fff;font-weight:bold;">O</div>
<div class="t ns" style="left:-81.6px;width:200px;text-align:center;top:174.86px;font-size:9px;line-height:9px;color:#fff;font-weight:bold;">J</div>
<div class="t ns" style="left:-81.6px;width:200px;text-align:center;top:185.46px;font-size:9px;line-height:9px;color:#fff;font-weight:bold;">E</div>
<div class="t ns" style="left:-81.6px;width:200px;text-align:center;top:196.06px;font-size:9px;line-height:9px;color:#fff;font-weight:bold;">K</div>
<div class="t ns" style="left:-81.6px;width:200px;text-align:center;top:217.36px;font-size:9px;line-height:9px;color:#fff;font-weight:bold;">1</div>
<div class="r" style="left:10px;top:247.8px;width:15px;height:13.099999999999966px;background:#fff;border-radius:2.5px"></div>
<div class="t " style="left:-82.4px;width:200px;text-align:center;top:248.30px;font-size:10px;line-height:10px;color:#111;font-weight:bold;">+</div>
<div class="r" style="left:10px;top:270px;width:15px;height:13.300000000000011px;background:#fff;border-radius:2.5px"></div>
<div class="r" style="left:15.6px;top:277.2px;width:3.799999999999999px;height:1.3000000000000114px;background:#111"></div>
<div class="r" style="left:12.2px;top:352.6px;width:15.400000000000002px;height:13.5px;background:#ffc000;border-radius:2.5px"></div>
<div class="t " style="left:-80px;width:200px;text-align:center;top:353.50px;font-size:10px;line-height:10px;color:#111;font-weight:bold;">+</div>
<div class="r" style="left:12.2px;top:375.6px;width:15.400000000000002px;height:13.299999999999955px;background:#ffc000;border-radius:2.5px"></div>
<div class="r" style="left:18.2px;top:382.7px;width:3.6000000000000014px;height:1.3000000000000114px;background:#111"></div>
<div class="t ns" style="left:41px;top:129.51px;font-size:7.3px;line-height:7.3px;color:#2b2b2b;font-weight:normal;">Nama</div>
<div class="t ns" style="left:98px;top:129.51px;font-size:7.3px;line-height:7.3px;color:#2b2b2b;font-weight:normal;">:</div>
<div class="t ns" style="left:41px;top:142.11px;font-size:7.3px;line-height:7.3px;color:#2b2b2b;font-weight:normal;">NIS/NISN</div>
<div class="t ns" style="left:98px;top:141.31px;font-size:7.3px;line-height:7.3px;color:#2b2b2b;font-weight:normal;">:</div>
<div class="t ns" style="left:153px;top:141.51px;font-size:7.3px;line-height:7.3px;color:#2b2b2b;font-weight:normal;">/</div>
<div class="t ns" style="left:41px;top:152.91px;font-size:7.3px;line-height:7.3px;color:#2b2b2b;font-weight:normal;">Nama Sekolah</div>
<div class="t ns" style="left:98px;top:152.91px;font-size:7.3px;line-height:7.3px;color:#2b2b2b;font-weight:normal;">:</div>
<div class="t ns" style="left:107.6px;top:154.09px;font-size:6.8px;line-height:6.8px;color:#2b2b2b;font-weight:normal;">ISI NAMA SEKOLAH</div>
<div class="t ns" style="left:41.5px;top:164.51px;font-size:7.3px;line-height:7.3px;color:#2b2b2b;font-weight:normal;">Alamat</div>
<div class="t ns" style="left:98px;top:164.51px;font-size:7.3px;line-height:7.3px;color:#2b2b2b;font-weight:normal;">:</div>
<div class="t ns" style="left:107.6px;top:164.51px;font-size:7.3px;line-height:7.3px;color:#2b2b2b;font-weight:normal;">Kp/Jalan</div>
<div class="t ns" style="left:278.8px;top:130.01px;font-size:7.3px;line-height:7.3px;color:#2b2b2b;font-weight:normal;">Kelas</div>
<div class="t ns" style="left:367.5px;top:130.21px;font-size:7.3px;line-height:7.3px;color:#2b2b2b;font-weight:normal;">:</div>
<div class="t ns" style="left:372.2px;top:130.51px;font-size:7.3px;line-height:7.3px;color:#2b2b2b;font-weight:normal;">Kelas 7</div>
<div class="t ns" style="left:279.5px;top:142.21px;font-size:7.3px;line-height:7.3px;color:#2b2b2b;font-weight:normal;">Fase</div>
<div class="t ns" style="left:367.5px;top:142.01px;font-size:7.3px;line-height:7.3px;color:#2b2b2b;font-weight:normal;">:</div>
<div class="t ns" style="left:372.5px;top:142.21px;font-size:7.3px;line-height:7.3px;color:#2b2b2b;font-weight:normal;">D</div>
<div class="t ns" style="left:279.5px;top:153.61px;font-size:7.3px;line-height:7.3px;color:#2b2b2b;font-weight:normal;">Tahun Pelajaran</div>
<div class="t ns" style="left:367.5px;top:153.51px;font-size:7.3px;line-height:7.3px;color:#2b2b2b;font-weight:normal;">:</div>
<div class="t ns" style="left:372.5px;top:154.62px;font-size:7.1px;line-height:7.1px;color:#2b2b2b;font-weight:normal;">2025/2026</div>
<div class="r" style="left:40px;top:174px;width:376px;height:2px;background:linear-gradient(#9a9a9a,#6a6a6a 50%,#9a9a9a)"></div>
<div class="r" style="left:40px;top:186px;width:376px;height:1px;background:#555555"></div>
<div class="r" style="left:40px;top:215px;width:376px;height:1px;background:#555555"></div>
<div class="r" style="left:40px;top:216px;width:376px;height:10px;background:#e3e3e3"></div>
<div class="r" style="left:40px;top:226px;width:376px;height:1px;background:#555555"></div>
<div class="r" style="left:40px;top:320px;width:376px;height:1px;background:#555555"></div>
<div class="r" style="left:40px;top:321px;width:376px;height:11px;background:#e3e3e3"></div>
<div class="r" style="left:40px;top:332px;width:376px;height:1px;background:#555555"></div>
<div class="r" style="left:68px;top:187px;width:1px;height:28px;background:#555555"></div>
<div class="r" style="left:68px;top:227px;width:1px;height:93px;background:#555555"></div>
<div class="r" style="left:68px;top:333px;width:1px;height:57px;background:#555555"></div>
<div class="r" style="left:231px;top:187px;width:1px;height:28px;background:#555555"></div>
<div class="r" style="left:231px;top:227px;width:1px;height:93px;background:#555555"></div>
<div class="r" style="left:231px;top:333px;width:1px;height:57px;background:#555555"></div>
<div class="r" style="left:277px;top:187px;width:1px;height:28px;background:#555555"></div>
<div class="r" style="left:277px;top:227px;width:1px;height:93px;background:#555555"></div>
<div class="r" style="left:277px;top:333px;width:1px;height:57px;background:#555555"></div>
<div class="r" style="left:323px;top:187px;width:1px;height:28px;background:#555555"></div>
<div class="r" style="left:323px;top:227px;width:1px;height:93px;background:#555555"></div>
<div class="r" style="left:323px;top:333px;width:1px;height:57px;background:#555555"></div>
<div class="r" style="left:370.6px;top:187px;width:1.599999999999966px;height:28px;background:#8c8c8c"></div>
<div class="r" style="left:370.6px;top:227px;width:1.599999999999966px;height:93px;background:#8c8c8c"></div>
<div class="r" style="left:370.6px;top:333px;width:1.599999999999966px;height:57px;background:#8c8c8c"></div>
<div class="r" style="left:53.2px;top:230.2px;width:2.0px;height:2.0px;background:#000;border-radius:50%"></div>
<div class="r" style="left:53.2px;top:335.7px;width:2.0px;height:2.0px;background:#000;border-radius:50%"></div>
<div class="t ns" style="left:-46.5px;width:200px;text-align:center;top:198.44px;font-size:6.9px;line-height:6.9px;color:#111;font-weight:bold;font-style:italic">1</div>
<div class="t ns" style="left:154.4px;width:200px;text-align:center;top:194.14px;font-size:6.9px;line-height:6.9px;color:#111;font-weight:bold;font-style:italic">Mulai</div>
<div class="t ns" style="left:154.4px;width:200px;text-align:center;top:202.44px;font-size:6.9px;line-height:6.9px;color:#111;font-weight:bold;font-style:italic">Berkembang</div>
<div class="t ns" style="left:200.2px;width:200px;text-align:center;top:198.44px;font-size:6.9px;line-height:6.9px;color:#111;font-weight:bold;font-style:italic">Berkembang</div>
<div class="t ns" style="left:247.3px;width:200px;text-align:center;top:190.44px;font-size:6.9px;line-height:6.9px;color:#111;font-weight:bold;font-style:italic">Berkembang</div>
<div class="t ns" style="left:247.3px;width:200px;text-align:center;top:198.44px;font-size:6.9px;line-height:6.9px;color:#111;font-weight:bold;font-style:italic">Sesuai</div>
<div class="t ns" style="left:247.3px;width:200px;text-align:center;top:206.44px;font-size:6.9px;line-height:6.9px;color:#111;font-weight:bold;font-style:italic">Harapan</div>
<div class="t ns" style="left:293.5px;width:200px;text-align:center;top:194.44px;font-size:6.9px;line-height:6.9px;color:#111;font-weight:bold;font-style:italic">Sangat</div>
<div class="t ns" style="left:293.5px;width:200px;text-align:center;top:202.44px;font-size:6.9px;line-height:6.9px;color:#111;font-weight:bold;font-style:italic">Berkembang</div>
<svg class="r" style="left:443px;top:287px" width="37" height="48" viewBox="0 0 37 48"><path d="M18.4 0.8 L36.2 18.5 H27.7 V47 H9 V18.5 H0.6 Z" fill="#4370c2" stroke="#2c4f92" stroke-width="0.7"/><path d="M18.4 2.6 L33.5 17.6 H26.6 V45.8 H10.2 V17.6 H3.3 Z" fill="#4674c8"/><path d="M10.2 17.6 V45.8" stroke="#6a92da" stroke-width="1"/><path d="M26.6 17.6 V45.8 H10.2" fill="none" stroke="#3a62ae" stroke-width="1"/><path d="M3.3 17.6 L18.4 2.6" stroke="#5f8ad6" stroke-width="0.9"/><path d="M18.4 2.6 L33.5 17.6" stroke="#3c66b3" stroke-width="0.9"/></svg>
<div class="t ns" style="left:361.4px;width:200px;text-align:center;top:301.90px;font-size:8.4px;line-height:8.4px;color:#fff;font-weight:bold;">T</div>
<div class="t ns" style="left:361.4px;width:200px;text-align:center;top:311.70px;font-size:8.4px;line-height:8.4px;color:#fff;font-weight:bold;">O</div>
<div class="t ns" style="left:361.4px;width:200px;text-align:center;top:320.70px;font-size:8.4px;line-height:8.4px;color:#fff;font-weight:bold;">P</div>
<div class="r" style="left:1px;top:395px;width:799px;height:8px;background:rgba(255,255,255,0.75);border-radius:4px"></div>
<div class="r" style="left:10px;top:396.7px;width:781px;height:5.100000000000023px;background:#6b6b6b;border-radius:3px"></div>
<svg class="r" style="left:3px;top:397px" width="5" height="6" viewBox="0 0 5 6"><path d="M4.5 0.3 V5.3 L0.5 2.8 Z" fill="#777"/></svg>
<svg class="r" style="left:794.5px;top:397px" width="5" height="6" viewBox="0 0 5 6"><path d="M0.5 0.3 V5.3 L4.5 2.8 Z" fill="#777"/></svg>
<div class="r" style="left:0px;top:409.5px;width:800px;height:11.800000000000011px;background:#f3f3f3;border-top:0.5px solid #e2e2e2;box-sizing:border-box"></div>
<div class="t " style="left:7px;top:412.52px;font-size:6.4px;line-height:6.4px;color:#333;font-weight:normal;-webkit-text-stroke:0.2px #333">Ready</div>
<svg class="r" style="left:36px;top:411px" width="10" height="9" viewBox="0 0 10 9"><rect x="0.5" y="0.5" width="8" height="7.3" fill="none" stroke="#555" stroke-width="0.8"/><path d="M0.5 1.6 H8.5" stroke="#555" stroke-width="1.2"/><circle cx="6.2" cy="5.8" r="2.5" fill="#f3f3f3" stroke="#555" stroke-width="0.8"/><circle cx="6.2" cy="5.8" r="1.1" fill="#222"/></svg>
<svg class="r" style="left:55px;top:410.5px" width="9" height="10" viewBox="0 0 9 10"><circle cx="3.5" cy="1.6" r="1.2" fill="none" stroke="#444" stroke-width="0.8"/><path d="M0.4 2.8 L2.3 4.3 H4.7 L6.6 2.8 M3.5 4.3 V6.2 L1.6 9.5 M3.5 6.2 L4.6 8" fill="none" stroke="#444" stroke-width="0.85"/><path d="M5.6 6.8 L8.4 9.4 M8.4 6.8 L5.6 9.4" stroke="#444" stroke-width="0.8"/></svg>
<div class="t " style="left:66px;top:412.32px;font-size:6.75px;line-height:6.75px;color:#262626;font-weight:normal;-webkit-text-stroke:0.4px #262626">Accessibility: Investigate</div>
<div class="r" style="left:624px;top:409.5px;width:23.5px;height:11.800000000000011px;background:#dcdcdc"></div>
<svg class="r" style="left:632px;top:411.5px" width="9" height="9" viewBox="0 0 9 9"><rect x="0.5" y="0.5" width="8" height="8" fill="none" stroke="#444" stroke-width="0.8"/><path d="M0.5 3.2 H8.5 M0.5 5.9 H8.5 M3.2 0.5 V8.5 M5.9 0.5 V8.5" stroke="#444" stroke-width="0.6"/></svg>
<svg class="r" style="left:655px;top:411.5px" width="9" height="9" viewBox="0 0 9 9"><rect x="0.5" y="0.5" width="8" height="8" fill="none" stroke="#555" stroke-width="0.8"/><path d="M3 0.5 V8.5 M6 0.5 V8.5" stroke="#555" stroke-width="0.6"/></svg>
<svg class="r" style="left:678px;top:411.5px" width="9" height="9" viewBox="0 0 9 9"><rect x="0.5" y="0.5" width="8" height="8" fill="none" stroke="#555" stroke-width="0.8"/><path d="M4.5 0.5 V5 H8.5" fill="none" stroke="#555" stroke-width="0.8"/></svg>
<div class="r" style="left:700px;top:415.3px;width:3.5px;height:0.8000000000000114px;background:#666"></div>
<div class="r" style="left:706px;top:415.4px;width:58px;height:0.6000000000000227px;background:#777"></div>
<div class="r" style="left:734px;top:412px;width:2.5px;height:7.5px;background:#555"></div>
<div class="r" style="left:767px;top:415.3px;width:4.5px;height:0.8000000000000114px;background:#666"></div>
<div class="r" style="left:768.85px;top:413.5px;width:0.7999999999999545px;height:4.5px;background:#666"></div>
<div class="t " style="left:780px;top:412.52px;font-size:6.4px;line-height:6.4px;color:#333;font-weight:normal;-webkit-text-stroke:0.15px #333">100%</div>
<div class="r" style="left:0px;top:421.3px;width:800px;height:28.69999999999999px;background:linear-gradient(90deg,#f6e2e2 0%,#f5e2e2 47%,#d3f1ee 55%,#d1f2ef 100%)"></div>
<div class="r" style="left:0px;top:421.3px;width:800px;height:0.6999999999999886px;background:rgba(255,255,255,0.5)"></div>
<svg class="r" style="left:13px;top:430px" width="13" height="13" viewBox="0 0 13 13"><defs><radialGradient id="wg" cx="0.4" cy="0.35" r="0.7"><stop offset="0" stop-color="#c9ced6"/><stop offset="1" stop-color="#7d8794"/></radialGradient></defs><circle cx="6" cy="6" r="6" fill="url(#wg)"/><ellipse cx="8" cy="8.5" rx="4" ry="2.2" fill="#fff"/><circle cx="8" cy="7" r="2" fill="#fff"/></svg>
<svg class="r" style="left:199px;top:429.2px" width="14" height="14" viewBox="0 0 14 14"><defs><linearGradient id="wl" x1="0" y1="0" x2="1" y2="1"><stop offset="0" stop-color="#2bb6f6"/><stop offset="1" stop-color="#0868d0"/></linearGradient></defs><rect x="0" y="0" width="6.6" height="6.6" fill="url(#wl)"/><rect x="7.3" y="0" width="6.6" height="6.6" fill="url(#wl)"/><rect x="0" y="7.3" width="6.6" height="6.6" fill="url(#wl)"/><rect x="7.3" y="7.3" width="6.6" height="6.6" fill="url(#wl)"/></svg>
<div class="r" style="left:220.6px;top:427px;width:126.9px;height:17.600000000000023px;background:#fcf5f5;border:0.6px solid #e6d8d8;border-radius:9px;box-sizing:border-box"></div>
<svg class="r" style="left:226.5px;top:431.5px" width="10" height="10" viewBox="0 0 10 10"><circle cx="4.2" cy="4.2" r="3.2" fill="none" stroke="#222" stroke-width="1.2"/><path d="M6.5 6.5 L9.2 9.2" stroke="#222" stroke-width="1.3"/></svg>
<div class="t " style="left:242px;top:432.34px;font-size:7.6px;line-height:7.6px;color:#555;font-weight:normal;-webkit-text-stroke:0.05px #555">Search</div>
<svg class="r" style="left:318px;top:428.8px" width="28" height="14.2" viewBox="0 0 28 14.2"><defs><clipPath id="lc"><ellipse cx="14" cy="7.1" rx="13.6" ry="6.8"/></clipPath><linearGradient id="sand" x1="0" x2="1"><stop offset="0" stop-color="#f2d7a6"/><stop offset="1" stop-color="#d98a4a"/></linearGradient></defs><g clip-path="url(#lc)"><rect width="28" height="14.2" fill="#f3e3ea"/><path d="M6.5 6 L8.2 0.6 L9.6 1 L10.5 5 L12.5 7 H5Z" fill="#3f5a3a"/><path d="M0 8.5 Q5 4.2 10 5 Q12.5 6 13.5 7.5 L14 8.5 H0Z" fill="#7aa83a"/><path d="M13 8.5 Q15 4.5 17.5 5.5 Q22 6 27 8 L28 9 H13Z" fill="#6f9e34"/><rect x="0" y="8.3" width="28" height="1" fill="#3d4a6a"/><path d="M0 9.2 H28 V14.2 H0Z" fill="url(#sand)"/><path d="M7 10 H15 Q16 11.5 14 12 H7Z" fill="#8cc8e8"/><path d="M0 9.3 H6 Q6.5 11 4 12 H0Z" fill="#3a3f5c"/></g><ellipse cx="14" cy="7.1" rx="13.6" ry="6.8" fill="none" stroke="#9aa0d0" stroke-width="0.8"/></svg>
<svg class="r" style="left:355.5px;top:429px" width="14" height="14" viewBox="0 0 14 14"><rect x="4.5" y="0.5" width="9" height="9" rx="1" fill="#ececec" stroke="#d8d8d8" stroke-width="0.6"/><path d="M0.8 3.8 H4.5 V9.5 H10 V13.2 H0.8 Z" fill="#1b1b1b"/><rect x="4.5" y="3.8" width="5.5" height="5.7" fill="#b9b9b9"/></svg>
<svg class="r" style="left:382px;top:429px" width="14" height="14" viewBox="0 0 14 14"><defs><linearGradient id="cp1" x1="0" y1="1" x2="1" y2="0"><stop offset="0" stop-color="#ff9a2e"/><stop offset="0.4" stop-color="#f0569e"/><stop offset="0.75" stop-color="#9b6cf0"/><stop offset="1" stop-color="#3b7df5"/></linearGradient><linearGradient id="cp2" x1="0" y1="0" x2="1" y2="1"><stop offset="0" stop-color="#2fb5e8"/><stop offset="0.5" stop-color="#42c28a"/><stop offset="1" stop-color="#f5c02e"/></linearGradient></defs><path d="M4.5 0.8 H10 Q8 1.5 7.2 4 L5 11.5 Q4.5 13.2 3 13.2 H1.8 Q0 13.2 0.4 11.2 L2.6 3 Q3.2 0.8 4.5 0.8Z" fill="url(#cp2)"/><path d="M9.5 13.2 H4 Q6 12.5 6.8 10 L9 2.5 Q9.5 0.8 11 0.8 H12.2 Q14 0.8 13.6 2.8 L11.4 11 Q10.8 13.2 9.5 13.2Z" fill="url(#cp1)"/></svg>
<svg class="r" style="left:407px;top:429px" width="14" height="14" viewBox="0 0 14 14"><circle cx="5" cy="2.3" r="2.2" fill="#7b83eb"/><circle cx="11" cy="3.3" r="1.8" fill="#5059c9"/><rect x="7" y="5.5" width="7" height="7.5" rx="2" fill="#5059c9"/><rect x="2" y="5" width="8" height="9" rx="2" fill="#7b83eb"/><rect x="0" y="5.5" width="7" height="7" rx="1" fill="#4b53bc"/><path d="M1.8 7.5 H5.2 M3.5 7.5 V11" stroke="#fff" stroke-width="1"/></svg>
<svg class="r" style="left:433px;top:429.5px" width="15" height="13" viewBox="0 0 15 13"><path d="M0 1 Q0 0 1 0 H5.5 L7 1.5 H14 Q15 1.5 15 2.5 V4 H0Z" fill="#e9a915"/><rect x="0" y="3" width="15" height="10" rx="1" fill="#fccd4d"/><rect x="3" y="7.5" width="9" height="5.5" rx="0.8" fill="#2f88d7"/></svg>
<div class="r" style="left:439.5px;top:445.2px;width:3.0px;height:1.0px;background:#666;border-radius:1px"></div>
<svg class="r" style="left:459px;top:428.6px" width="14.2" height="14.2" viewBox="0 0 14.2 14.2"><circle cx="7.1" cy="7.1" r="7" fill="#db4437"/><path d="M7.1 7.1 L13.1 3.6 A7 7 0 0 1 7.1 14.1 Z" fill="#fcc934"/><path d="M7.1 7.1 L7.1 14.1 A7 7 0 0 1 1.1 3.6 Z" fill="#0f9d58"/><circle cx="7.1" cy="7.1" r="3.3" fill="#fff"/><circle cx="7.1" cy="7.1" r="2.5" fill="#3b78e7"/></svg>
<svg class="r" style="left:484.7px;top:429px" width="14" height="14" viewBox="0 0 14 14"><defs><linearGradient id="eg" x1="0" y1="0" x2="1" y2="1"><stop offset="0" stop-color="#2d9be0"/><stop offset="0.55" stop-color="#1677c9"/><stop offset="1" stop-color="#0c4f9e"/></linearGradient><linearGradient id="eg2" x1="0" y1="0" x2="1" y2="0"><stop offset="0" stop-color="#3fc5c0"/><stop offset="1" stop-color="#7ad462"/></linearGradient></defs><circle cx="7" cy="7" r="6.9" fill="url(#eg)"/><path d="M1.2 5 Q2.5 0.3 7.5 0.2 Q12.8 0.5 13.8 6 Q13.8 9 10.5 9.2 H6.5 Q6.2 7.2 8.5 6.8 Q7.5 4.2 4.8 4.5 Q2.5 4.8 1.2 5Z" fill="url(#eg2)"/><path d="M4.3 8 Q4.5 5.5 7 5.6 Q9 5.8 9.2 7.6 H6.3 Q6.5 10.8 10 11.2 Q11.8 11.3 13 10.5 Q11 13.6 7.5 13.8 Q4.2 12.5 4.3 8Z" fill="#b8e0f5" opacity="0.55"/></svg>
<svg class="r" style="left:510.5px;top:429px" width="13" height="13" viewBox="0 0 13 13"><defs><linearGradient id="wd" x1="0" y1="0" x2="0" y2="1"><stop offset="0" stop-color="#41a5ee"/><stop offset="1" stop-color="#103f91"/></linearGradient></defs><rect x="2.5" y="0" width="10.5" height="13" rx="1.5" fill="url(#wd)"/><rect x="0" y="5" width="6.5" height="6.5" rx="0.8" fill="#185abd"/><path d="M1 6.8 L1.9 10 L3.2 7.5 L4.5 10 L5.4 6.8" fill="none" stroke="#fff" stroke-width="0.7"/></svg>
<div class="r" style="left:532px;top:424.8px;width:22.399999999999977px;height:22.19999999999999px;background:rgba(255,255,255,0.55);border-radius:3px"></div>
<svg class="r" style="left:536px;top:429px" width="13" height="13" viewBox="0 0 13 13"><rect x="2.5" y="0" width="10.5" height="13" rx="1.5" fill="#21a366"/><rect x="7.5" y="0" width="5.5" height="6.5" fill="#33c481"/><rect x="2.5" y="6.5" width="10.5" height="6.5" fill="#107c41"/><rect x="2.5" y="0" width="5" height="6.5" fill="#4fbf7c"/><rect x="0" y="4.5" width="6.5" height="6.5" rx="0.8" fill="#185c37"/><path d="M1.5 6 L5 9.8 M5 6 L1.5 9.8" stroke="#fff" stroke-width="0.8"/></svg>
<div class="r" style="left:539px;top:444.9px;width:8px;height:1.6000000000000227px;background:#0f6cbd;border-radius:1px"></div>
<svg class="r" style="left:562px;top:429px" width="14" height="14" viewBox="0 0 14 14"><circle cx="7.5" cy="7" r="6.5" fill="#ed6c47"/><path d="M7.5 0.5 A6.5 6.5 0 0 1 14 7 H7.5Z" fill="#ff8f6b"/><path d="M1 7 A6.5 6.5 0 0 0 14 7 H7.5Z" fill="#d35230"/><rect x="0" y="4" width="6.5" height="6.5" rx="0.8" fill="#c43e1c"/><path d="M2 9.3 V5.5 H3.8 A1.2 1.2 0 0 1 3.8 7.9 H2" fill="none" stroke="#fff" stroke-width="0.8"/></svg>
<svg class="r" style="left:588px;top:429px" width="15" height="14" viewBox="0 0 15 14"><path d="M7 0.5 Q13.5 0.5 13.5 6 Q13.5 8 11 8.5 Q9 9 9.5 11 Q10 13.5 6.5 13.5 Q0.5 13.5 0.5 7 Q0.5 0.5 7 0.5Z" fill="#29a3ea"/><circle cx="4" cy="4" r="1.2" fill="#6fd04b"/><circle cx="7.3" cy="2.5" r="1.2" fill="#ffc83d"/><circle cx="2.8" cy="7.3" r="1.2" fill="#f25022"/><circle cx="5.7" cy="7" r="1" fill="#fff"/><path d="M11.8 3 L10.2 12.5" stroke="#b86b2b" stroke-width="1.5"/><path d="M11.3 2 L12.6 2.3 L12.1 4.5 L10.9 4.2Z" fill="#e8e8e8"/></svg>
<div class="r" style="left:594px;top:445.2px;width:3px;height:1.0px;background:#666;border-radius:1px"></div>
<svg class="r" style="left:666.5px;top:433.5px" width="7" height="4.5" viewBox="0 0 7 4.5"><path d="M0.5 4 L3.5 0.8 L6.5 4" fill="none" stroke="#222" stroke-width="0.9"/></svg>
<svg class="r" style="left:684px;top:431.5px" width="11" height="10" viewBox="0 0 11 10"><path d="M2 7.5 Q0 7.5 0.3 5.3 Q0.8 3.5 2.5 3.8 Q3.5 1 6.3 1.3 Q9 1.6 9 4.5" fill="#e8e8e8" stroke="#444" stroke-width="0.8"/><circle cx="7.5" cy="7" r="3" fill="#1a73e8"/><path d="M6 7.5 L7.3 6 L8.7 7.5" fill="none" stroke="#fff" stroke-width="0.7"/></svg>
<svg class="r" style="left:702px;top:431px" width="11" height="11" viewBox="0 0 11 11"><circle cx="5.3" cy="5.3" r="4.8" fill="none" stroke="#333" stroke-width="0.8"/><ellipse cx="5.3" cy="5.3" rx="2" ry="4.8" fill="none" stroke="#333" stroke-width="0.7"/><path d="M0.5 5.3 H10 M1.2 2.8 H9.4 M1.2 7.8 H9.4" stroke="#333" stroke-width="0.6"/><circle cx="8" cy="8" r="2.4" fill="#d1f2ef" stroke="#333" stroke-width="0.7"/></svg>
<svg class="r" style="left:716px;top:431.5px" width="10" height="9" viewBox="0 0 10 9"><path d="M0.5 3 H2.5 L5 0.8 V8.2 L2.5 6 H0.5 Z" fill="none" stroke="#333" stroke-width="0.8"/><path d="M7 2.5 Q8.3 4.5 7 6.5" fill="none" stroke="#bbb" stroke-width="0.8"/></svg>
<svg class="r" style="left:730.5px;top:434.5px" width="13" height="5" viewBox="0 0 13 5"><rect x="0.4" y="0.4" width="11" height="4.2" rx="1.2" fill="none" stroke="#333" stroke-width="0.8"/><rect x="1.6" y="1.5" width="6.5" height="2" fill="#111"/><rect x="11.8" y="1.6" width="0.9" height="1.8" fill="#333"/></svg>
<div class="t " style="right:11.200000000000045px;top:427.89px;font-size:6.8px;line-height:6.8px;color:#222;font-weight:normal;-webkit-text-stroke:0.1px #222">20:46</div>
<div class="t " style="right:11.200000000000045px;top:436.77px;font-size:7.2px;line-height:7.2px;color:#222;font-weight:normal;-webkit-text-stroke:0.1px #222">19/01/2026</div>
</body></html>
